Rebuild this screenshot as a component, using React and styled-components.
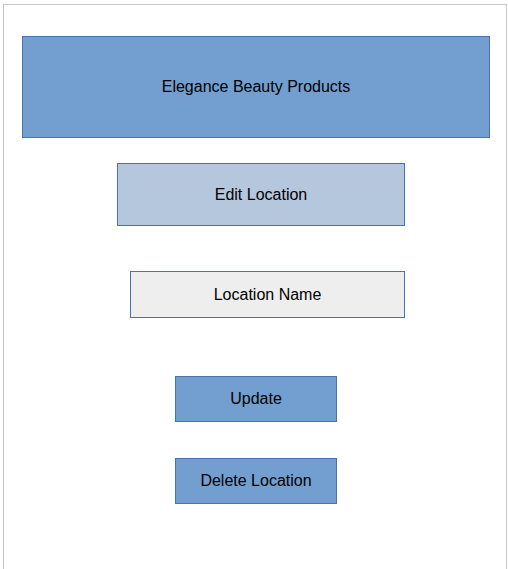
import React from "react";
import styled, { createGlobalStyle } from "styled-components";

const GlobalStyle = createGlobalStyle`
  *, *::before, *::after { box-sizing: border-box; }
  body {
    margin: 0;
    background: #ffffff;
    color: #000000;
    font: 16px/20px "Liberation Sans", Arial, sans-serif;
  }
`;

const Page = styled.main`
  display: flex;
  flex-direction: column;
  min-height: calc(100vh - 4px);
  margin: 4px 1px 0 3px;
  padding: 31px 16px 64px 18px;
  border: 1px solid #c8c8c8;
  border-bottom: 0;
`;

const Header = styled.header`
  display: flex;
  align-items: center;
  justify-content: center;
  min-height: 102px;
  border: 1px solid #4674b0;
  background: #729fcf;
`;

const Title = styled.h1`
  margin: 0;
  font-size: 16px;
  font-weight: 400;
`;

const Form = styled.form`
  display: flex;
  flex-direction: column;
  gap: 58px;
  margin-top: 25px;
`;

const Fields = styled.div`
  display: flex;
  flex-direction: column;
  gap: 45px;
  padding: 0 85px 0 95px;
`;

const Heading = styled.h2`
  margin: 0;
  padding: 21px 0 20px;
  border: 1px solid #4674b0;
  background: #b4c7dc;
  font-size: 16px;
  font-weight: 400;
  text-align: center;
`;

const NameInput = styled.input`
  height: 47px;
  margin-left: 13px;
  padding: 0 8px;
  border: 1px solid #4674b0;
  border-radius: 0;
  background: #eeeeee;
  color: inherit;
  font: inherit;
  text-align: center;

  &::placeholder {
    color: inherit;
    opacity: 1;
  }
`;

const Actions = styled.div`
  display: grid;
  grid-template-columns: 162px;
  justify-content: center;
  gap: 36px;
`;

const ActionButton = styled.button`
  height: 46px;
  padding: 0 8px;
  border: 1px solid #4674b0;
  border-radius: 0;
  background: #729fcf;
  color: inherit;
  font: inherit;
  cursor: pointer;
`;

export default function App() {
  return (
    <>
      <GlobalStyle />
      <Page>
        <Header>
          <Title>Elegance Beauty Products</Title>
        </Header>
        <Form onSubmit={(event) => event.preventDefault()}>
          <Fields>
            <Heading>Edit Location</Heading>
            <NameInput type="text" aria-label="Location Name" placeholder="Location Name" />
          </Fields>
          <Actions>
            <ActionButton type="submit">Update</ActionButton>
            <ActionButton type="button">Delete Location</ActionButton>
          </Actions>
        </Form>
      </Page>
    </>
  );
}
